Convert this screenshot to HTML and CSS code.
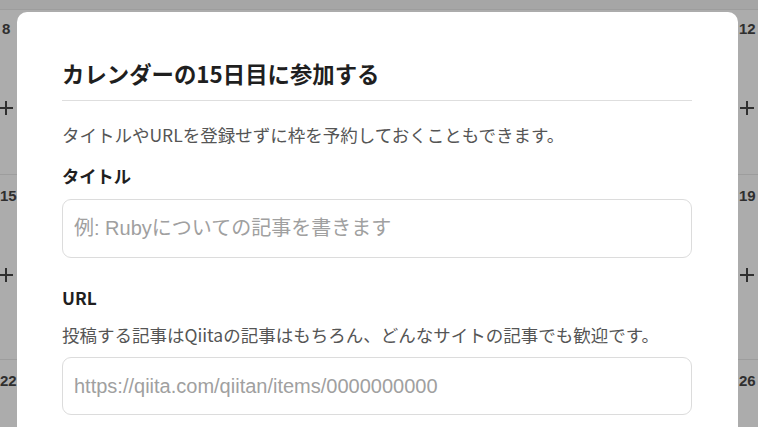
FILE: index.html
```html
<!DOCTYPE html>
<html lang="ja">
<head>
<meta charset="utf-8">
<title>カレンダーの15日目に参加する</title>
<link rel="stylesheet" href="styles.css">
</head>
<body>
<div class="calendar">
  <div class="cal-head"></div>
  <div class="week week-1">
    <div class="cell cell-left"><span class="date">8</span><span class="plus"><svg viewBox="0 0 16 16" width="16" height="16"><path d="M8 1v14M1 8h14" stroke="#2f2f2f" stroke-width="2" fill="none"/></svg></span></div>
    <div class="cell cell-mid"></div>
    <div class="cell cell-right"><span class="date">12</span><span class="plus"><svg viewBox="0 0 16 16" width="16" height="16"><path d="M8 1v14M1 8h14" stroke="#2f2f2f" stroke-width="2" fill="none"/></svg></span></div>
  </div>
  <div class="week week-2">
    <div class="cell cell-left"><span class="date">15</span><span class="plus"><svg viewBox="0 0 16 16" width="16" height="16"><path d="M8 1v14M1 8h14" stroke="#2f2f2f" stroke-width="2" fill="none"/></svg></span></div>
    <div class="cell cell-mid"></div>
    <div class="cell cell-right"><span class="date">19</span><span class="plus"><svg viewBox="0 0 16 16" width="16" height="16"><path d="M8 1v14M1 8h14" stroke="#2f2f2f" stroke-width="2" fill="none"/></svg></span></div>
  </div>
  <div class="week week-3">
    <div class="cell cell-left"><span class="date">22</span></div>
    <div class="cell cell-mid"></div>
    <div class="cell cell-right"><span class="date">26</span></div>
  </div>
</div>

<div class="modal">
  <h2 class="modal-title">カレンダーの15日目に参加する</h2>
  <p class="desc desc-top">タイトルやURLを登録せずに枠を予約しておくこともできます。</p>
  <div class="field field-title">
    <label class="label" for="title">タイトル</label>
    <input class="input" id="title" type="text" placeholder="例: Rubyについての記事を書きます">
  </div>
  <div class="field field-url">
    <label class="label" for="url">URL</label>
    <p class="desc desc-url">投稿する記事はQiitaの記事はもちろん、どんなサイトの記事でも歓迎です。</p>
    <input class="input" id="url" type="text" placeholder="https://qiita.com/qiitan/items/0000000000">
  </div>
</div>
</body>
</html>
```

FILE: styles.css
```css
html, body {
  margin: 0;
  padding: 0;
}

body {
  width: 758px;
  height: 427px;
  overflow: hidden;
  position: relative;
  background: #acacac;
  font-family: "Noto Sans CJK JP", "Noto Sans", sans-serif;
  color: #222;
}

.calendar {
  display: flex;
  flex-direction: column;
  width: 758px;
  height: 427px;
  overflow: hidden;
}

.cal-head {
  height: 9px;
  background: #a6a6a6;
  border-bottom: 1px solid #9d9d9d;
}

.week {
  display: grid;
  grid-template-columns: 17px 1fr 20px;
  border-bottom: 1px solid #9d9d9d;
}

.week-1 { height: 164px; }
.week-2 { height: 184px; }
.week-3 { height: 66px; border-bottom: 0; }

.cell {
  display: flex;
  flex-direction: column;
  align-items: flex-start;
  overflow: hidden;
}

.cell-right { padding-left: 1px; }

.date {
  font-family: "Liberation Sans", Arial, sans-serif;
  font-weight: 700;
  font-size: 15px;
  line-height: 16px;
  color: #2f2f2f;
  margin-top: 11px;
  letter-spacing: -0.2px;
}

.cell-left .date { margin-left: 0; }
.week-1 .cell-left .date { margin-left: 2px; }

.week-2 .date,
.week-3 .date { margin-top: 13px; }

.plus {
  display: flex;
  margin-top: 63px;
}

.cell-left .plus { margin-left: -2px; }

.modal {
  position: absolute;
  left: 17px;
  top: 12px;
  width: 721px;
  height: 415px;
  box-sizing: border-box;
  padding: 45px 46px 0 45px;
  background: #fff;
  border-radius: 10px 10px 0 0;
  overflow: hidden;
}

.modal-title {
  margin: 0;
  font-size: 22.4px;
  line-height: 33px;
  font-weight: 700;
  color: #1f1f1f;
  padding-bottom: 10px;
  border-bottom: 1px solid #dedede;
}

.desc {
  margin: 0;
  font-size: 17.5px;
  line-height: 26px;
  color: #555;
}

.desc-top { margin-top: 21px; }

.field {
  display: flex;
  flex-direction: column;
}

.field-title { margin-top: 15px; }
.field-url { margin-top: 27px; }

.label {
  font-size: 17.3px;
  line-height: 26px;
  font-weight: 700;
  color: #1f1f1f;
}

.field-title .input { margin-top: 10px; height: 59px; }
.desc-url { margin-top: 11px; }
.field-url .input { margin-top: 9px; height: 58px; }

.input {
  box-sizing: border-box;
  width: 100%;
  border: 1px solid #dcdcdc;
  border-radius: 9px;
  padding: 0 11px;
  font-family: "Liberation Sans", "Noto Sans CJK JP", sans-serif;
  font-size: 20px;
  color: #222;
  background: #fff;
  outline: none;
}

.input::placeholder {
  color: #a0a0a0;
  opacity: 1;
}
```
